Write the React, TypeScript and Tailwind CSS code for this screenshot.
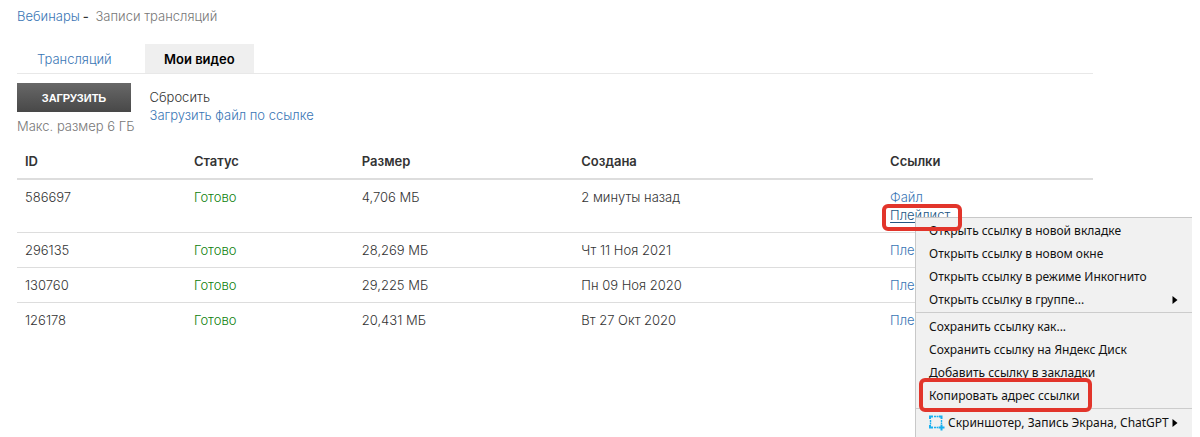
type Video = { id: string; size: string; created: string };

const videos: Video[] = [
  { id: '586697', size: '4,706 МБ', created: '2 минуты назад' },
  { id: '296135', size: '28,269 МБ', created: 'Чт 11 Ноя 2021' },
  { id: '130760', size: '29,225 МБ', created: 'Пн 09 Ноя 2020' },
  { id: '126178', size: '20,431 МБ', created: 'Вт 27 Окт 2020' },
];

const openItems = [
  'Открыть ссылку в новой вкладке',
  'Открыть ссылку в новом окне',
  'Открыть ссылку в режиме Инкогнито',
];
const saveItems = ['Сохранить ссылку как...', 'Сохранить ссылку на Яндекс Диск', 'Добавить ссылку в закладки'];

const itemClass = 'relative flex h-[23px] w-full items-center pl-[13px] pr-3.5 text-left whitespace-nowrap';

function Arrow() {
  return (
    <svg className="ml-auto h-2 w-1.5 shrink-0" viewBox="0 0 6 8" aria-hidden="true">
      <path d="M0.5 0 L5.5 4 L0.5 8 Z" fill="#000" />
    </svg>
  );
}

function CaptureIcon() {
  return (
    <svg className="mr-[3px] h-4 w-4 shrink-0" viewBox="0 0 16 16" fill="none" stroke="#18b0f0" aria-hidden="true">
      <path d="M1 4V1.5H4M10 1.5H12.5V4M1 10V12.5H4" strokeWidth="2" />
      <path d="M5 1.5H9.5M1.5 5V9.5M12.5 5V9M5 12.5H9" strokeWidth="1.4" strokeDasharray="2 0.6" />
      <path d="M12.5 9.5V15.5M9.5 12.5H15.5" strokeWidth="2" />
    </svg>
  );
}

function ContextMenu() {
  return (
    <div
      role="menu"
      className="absolute top-[11px] left-[25px] z-10 w-[277px] border-t border-l border-[#c8c8c8] bg-[#f1f1f1] pt-px pb-1 font-['Noto_Sans',sans-serif] text-[12px] font-normal text-[#111]"
    >
      {openItems.map((label) => (
        <button key={label} role="menuitem" className={itemClass}>{label}</button>
      ))}
      <button role="menuitem" className={itemClass}>
        Открыть ссылку в группе...
        <Arrow />
      </button>
      <div className="mt-px mb-0.5 h-px bg-[#cccccc]" />
      {saveItems.map((label) => (
        <button key={label} role="menuitem" className={itemClass}>{label}</button>
      ))}
      <button role="menuitem" className={itemClass}>
        <span className="absolute -top-1.5 left-[3px] h-[34px] w-[173px] rounded-md border-4 border-[#e2352b]" />
        Копировать адрес ссылки
      </button>
      <div className="my-px h-px bg-[#cccccc]" />
      <button role="menuitem" className={itemClass + ' mt-0.5'}>
        <CaptureIcon />
        Скриншотер, Запись Экрана, ChatGPT
        <Arrow />
      </button>
    </div>
  );
}

export default function App() {
  return (
    <main className="min-h-screen overflow-hidden bg-white pt-[7px] pr-[107px] pl-[17px] font-[Inter,sans-serif] text-[13px] leading-[18px] font-light text-[#333]">
      <nav className="text-[#777]">
        <a href="#webinars" className="text-[#3a76b5]">Вебинары</a>
        <span className="mx-[3px] font-medium text-[#333]">-</span> Записи трансляций
      </nav>

      <div className="mt-[19px] flex h-[30px] border-b border-[#e8e8e8]">
        <a href="#streams" className="flex w-32 items-center pl-5 text-[#3a76b5]">Трансляций</a>
        <a href="#videos" className="flex items-center bg-[#efefef] px-[19px] font-semibold text-black">Мои видео</a>
      </div>

      <div className="mt-[9px] flex gap-[15px]">
        <div>
          <button className="block h-[29px] w-[114px] bg-linear-to-b from-[#686868] to-[#484848] font-['Liberation_Sans',sans-serif] text-[11px] font-bold text-white">
            ЗАГРУЗИТЬ
          </button>
          <p className="mt-[5px] whitespace-nowrap text-[#777]">Макс. размер 6 ГБ</p>
        </div>
        <div className="flex flex-col items-start pt-[5px]">
          <button>Сбросить</button>
          <a href="#upload" className="text-[#3a76b5]">Загрузить файл по ссылке</a>
        </div>
      </div>

      <table className="mt-[9px] w-full table-fixed border-collapse text-left">
        <thead>
          <tr className="border-b-2 border-[#dddddd] [&>th]:px-2 [&>th]:py-2 [&>th]:font-semibold">
            <th className="w-[15.7%]">ID</th>
            <th className="w-[15.6%]">Статус</th>
            <th className="w-[20.4%]">Размер</th>
            <th className="w-[28.7%]">Создана</th>
            <th>Ссылки</th>
          </tr>
        </thead>
        <tbody>
          {videos.map((video, i) => (
            <tr key={video.id} className="border-b border-[#dddddd] align-top last:border-b-0 [&>td]:p-2">
              <td>{video.id}</td>
              <td className="text-[#0b800b]">Готово</td>
              <td>{video.size}</td>
              <td>{video.created}</td>
              <td className="text-[#3a76b5]">
                {i === 0 ? (
                  <>
                    <a href="#file" className="block">Файл</a>
                    <div className="relative">
                      <a href="#playlist" className="text-[#235784] underline underline-offset-2">Плейлист</a>
                      <ContextMenu />
                      <span className="pointer-events-none absolute -top-0.5 -left-2 z-20 h-[27px] w-20 rounded-md border-4 border-[#e2352b]" />
                    </div>
                  </>
                ) : (
                  <a href={'#playlist-' + video.id}>Плейлист</a>
                )}
              </td>
            </tr>
          ))}
        </tbody>
      </table>
    </main>
  );
}
